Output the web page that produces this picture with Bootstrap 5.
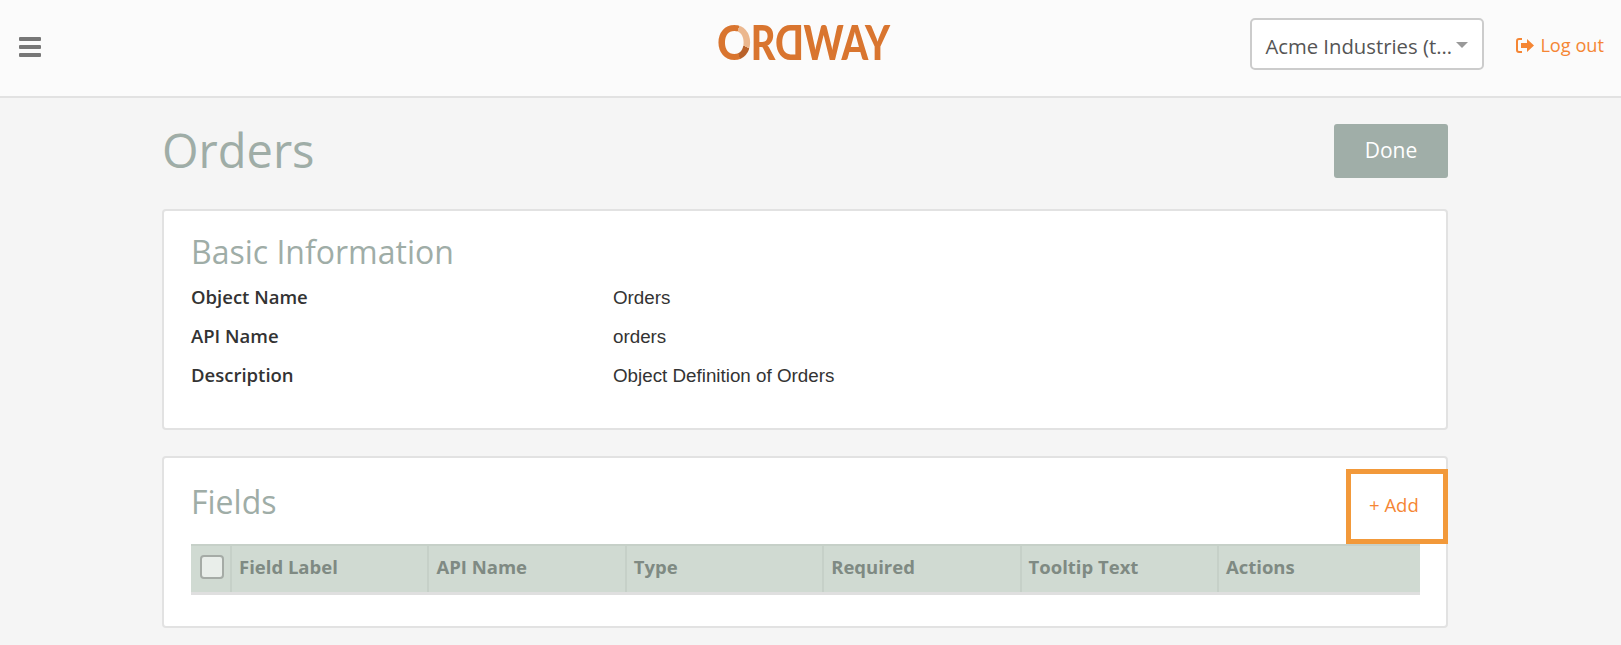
<!DOCTYPE html>
<html lang="en">

<head>
    <meta charset="UTF-8">
    <title>Orders</title>
    <link href="https://cdn.jsdelivr.net/npm/bootstrap@5.3.3/dist/css/bootstrap.min.css" rel="stylesheet">
    <style>
        body { background: #f5f5f5; font-family: "Open Sans", sans-serif; color: #333; overflow: hidden; }
        .top-bar { height: 98px; background: #fbfbfb; border-bottom: 2px solid #e2e2e2; padding: 0 17px 2px 19px; }
        .menu-icon { width: 22px; height: 20px; display: block; }
        .brand-logo { left: 717px; top: 14px; font-family: "Lato", sans-serif; font-weight: 900; font-size: 47px; line-height: 56px; color: #d9752f; letter-spacing: -.5px; white-space: nowrap; transform: scaleX(.81); transform-origin: left center; }
        .logo-ring { display: inline-block; margin-right: 4px; transform: scaleX(1.12); transform-origin: left center; background: conic-gradient(#d9752f 0 5%, #ebb78e 5% 31%, #b9622a 31% 44%, #d9752f 44% 100%); -webkit-background-clip: text; background-clip: text; color: transparent; }
        .logo-flip { display: inline-block; transform: scaleX(-1); }
        .right-group { margin-bottom: 6px; }
        .org-select { width: 234px; height: 52px; background: #fff; border: 2px solid #ccc; border-radius: 5px; font-size: 20.3px; color: #555; padding: 0 20px 0 13px; line-height: 52px; margin-right: 32px; white-space: nowrap; }
        .org-caret { right: 14px; top: 22px; width: 0; height: 0; border-left: 6px solid transparent; border-right: 6px solid transparent; border-top: 6px solid #999; }
        .logout-link { color: #f58634; font-size: 18.2px; text-decoration: none; margin-top: 3px; gap: 6px; }
        .page-wrap { width: 1286px; margin-left: 162px; }
        .title-row { padding-top: 26px; margin-bottom: 31px; }
        .page-title { font-size: 47px; font-weight: 400; color: #9fada7; margin: 0; line-height: 52px; }
        .done-btn { width: 114px; height: 54px; background: #a0aea8; border: 0; border-radius: 3px; color: #fff; font-size: 21px; }
        .info-card { background: #fff; border: 2px solid #e2e2e2; border-radius: 4px; padding: 21px 27px 34px; margin-bottom: 26px; }
        .fields-card { padding-top: 24px; padding-bottom: 31px; margin-bottom: 0; }
        .info-title { font-size: 32px; font-weight: 400; color: #9fada7; margin: 0 0 5px; line-height: 40px; }
        .fields-card .info-title { margin-bottom: 22px; }
        .info-row { height: 39px; line-height: 39px; }
        .info-label { width: 422px; font-size: 18.5px; font-weight: 600; color: #333; }
        .info-value { font-family: "Liberation Sans", sans-serif; font-size: 18.8px; color: #333; padding-top: 1px; }
        .add-box { right: -2px; top: 11px; width: 102px; height: 75px; border: 5px solid #f2993a; color: #f58634; font-size: 18.5px; padding-top: 17px; padding-left: 18px; }
        .field-table { width: 1229px; table-layout: fixed; margin: 0; border-top: 2px solid #c6d0c8; border-bottom: 3px solid #dfdfdf; }
        .field-table th { background: #d0dad2; color: #7f8a83; font-size: 18.5px; font-weight: 700; padding: 0 7px 3px; height: 48px; border: 0; border-left: 2px solid #c6d0c8; box-shadow: none; vertical-align: middle; white-space: nowrap; }
        .field-table th:not(:first-child):not(:last-child) { width: 197.4px; }
        .field-table th:first-child { border-left: 0; padding: 0 0 3px 9px; width: 40px; }
        .head-check { display: block; width: 24px; height: 24px; background: #e9eeea; border: 2px solid #a5aba6; border-radius: 4px; }
    </style>
</head>

<body>
    <nav class="top-bar d-flex align-items-center position-relative">
        <svg class="menu-icon" viewBox="0 0 22 20" fill="#777">
            <rect y="0" width="22" height="4" rx="1"></rect>
            <rect y="8" width="22" height="4" rx="1"></rect>
            <rect y="16" width="22" height="4" rx="1"></rect>
        </svg>
        <div class="brand-logo position-absolute"><span class="logo-ring">O</span>R<span class="logo-flip">D</span>WAY</div>
        <div class="right-group ms-auto d-flex align-items-center">
            <div class="org-select position-relative">Acme Industries (t…<span class="org-caret position-absolute"></span></div>
            <a href="#" class="logout-link d-flex align-items-center">
                <svg width="18" height="15" viewBox="0 0 18 15" fill="#f58634">
                    <path d="M6 0H3a3 3 0 0 0-3 3v9a3 3 0 0 0 3 3h3v-2H3a1 1 0 0 1-1-1V3a1 1 0 0 1 1-1h3z"></path>
                    <path d="M11 1l7 6.5-7 6.5v-4H5V5h6z"></path>
                </svg>
                Log out
            </a>
        </div>
    </nav>

    <main class="page-wrap">
        <div class="title-row d-flex justify-content-between align-items-start">
            <h1 class="page-title">Orders</h1>
            <button class="done-btn" type="button">Done</button>
        </div>

        <section class="info-card">
            <h2 class="info-title">Basic Information</h2>
            <div class="info-row d-flex"><div class="info-label">Object Name</div><div class="info-value">Orders</div></div>
            <div class="info-row d-flex"><div class="info-label">API Name</div><div class="info-value">orders</div></div>
            <div class="info-row d-flex"><div class="info-label">Description</div><div class="info-value">Object Definition of Orders</div></div>
        </section>

        <section class="info-card fields-card position-relative">
            <h2 class="info-title">Fields</h2>
            <a class="add-box position-absolute text-decoration-none" href="#">+ Add</a>
            <table class="table field-table">
                <thead>
                    <tr>
                        <th><span class="head-check"></span></th>
                        <th>Field Label</th>
                        <th>API Name</th>
                        <th>Type</th>
                        <th>Required</th>
                        <th>Tooltip Text</th>
                        <th>Actions</th>
                    </tr>
                </thead>
            </table>
        </section>
    </main>
</body>

</html>
